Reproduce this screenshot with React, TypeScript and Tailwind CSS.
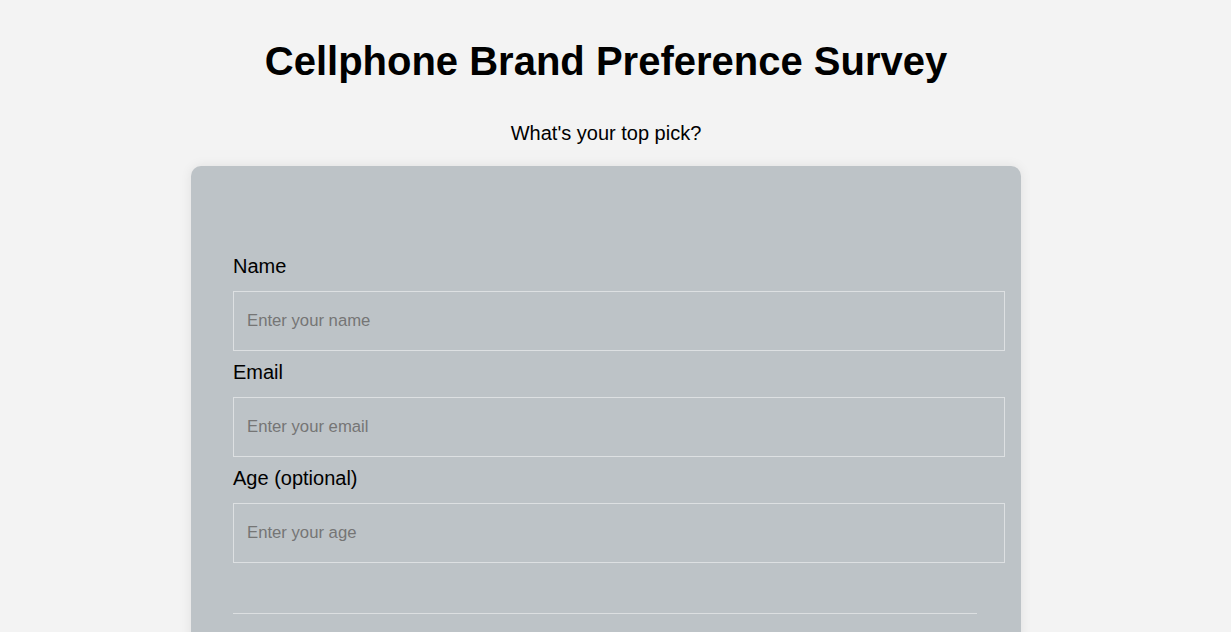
import React from 'react';

const fields = [
    { id: 'name', label: 'Name', placeholder: 'Enter your name', type: 'text' },
    { id: 'email', label: 'Email', placeholder: 'Enter your email', type: 'email' },
    { id: 'age', label: 'Age (optional)', placeholder: 'Enter your age', type: 'number' },
];

const App: React.FC = () => {
    return (
        <div className="min-h-screen bg-[#f3f3f3] font-['Liberation_Sans',Arial,sans-serif] text-black">
            <div className="w-[1212px]">
                {/* Header */}
                <header className="pt-[38px] text-center">
                    <h1 className="text-[40px] font-bold leading-[46px]">Cellphone Brand Preference Survey</h1>
                    <p className="mt-[38px] text-[20px] leading-[23px]">What's your top pick?</p>
                </header>

                {/* Survey card */}
                <main className="mx-auto mt-[21px] w-[830px] rounded-[10px] bg-[#bdc3c7] px-[42px] pt-[89px] pb-10 shadow-[0_0_12px_rgba(0,0,0,0.08)]">
                    <form className="w-[744px]">
                        {fields.map((f) => (
                            <div key={f.id}>
                                <label htmlFor={f.id} className="mb-[13px] block text-[20px] leading-[23px]">
                                    {f.label}
                                </label>
                                <input
                                    id={f.id}
                                    type={f.type}
                                    placeholder={f.placeholder}
                                    className="mb-[10px] block h-[60px] w-[772px] border border-[#dde0e2] bg-transparent px-[13px] text-[16.7px] outline-none placeholder:text-[#757575]"
                                />
                            </div>
                        ))}
                        <hr className="mt-[50px] border-0 border-t border-[#dcdfe1]" />
                        <div className="h-[200px]" />
                    </form>
                </main>
            </div>
        </div>
    );
};

export default App;
